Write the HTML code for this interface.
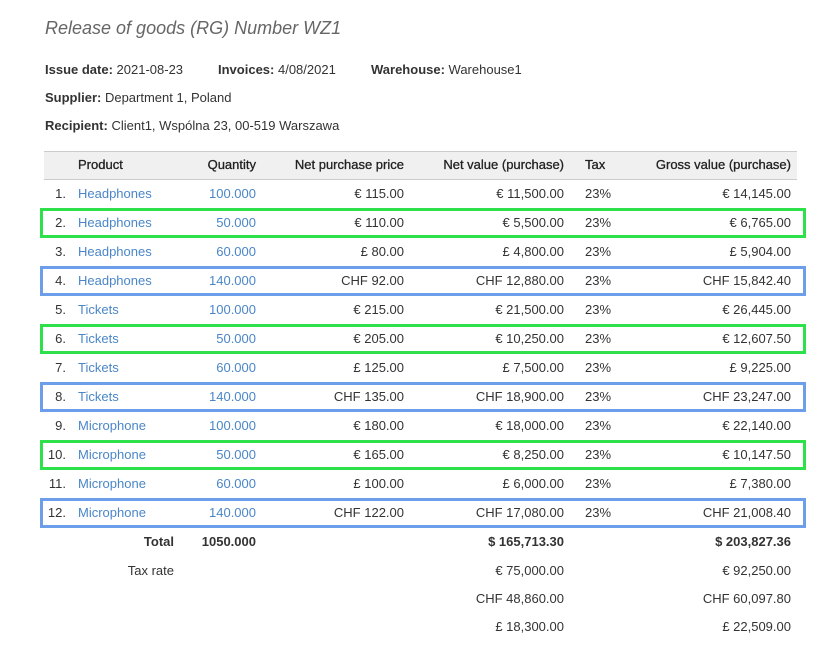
<!DOCTYPE html>
<html><head><meta charset="utf-8"><style>
body{margin:0;width:828px;height:650px;background:#fff;font-family:"Liberation Sans",Arial,sans-serif;font-size:13px;color:#333;position:relative;overflow:hidden}
.a{position:absolute;white-space:nowrap;line-height:16px}
.l{color:#4a86c8}
b{font-weight:bold}
.row{position:absolute;left:0;width:828px;height:29px}
.row span{position:absolute;top:7px;line-height:16px;white-space:nowrap}
.c1{right:762px}.c2{left:78px}.c3{right:572px}.c4{right:424px}.c5{right:264px}.c6{left:585px}.c7{right:37px}
.box{position:absolute;left:40px;width:760px;height:24px;border:3px solid}
.g{border-color:#2ee04a}.bl{border-color:#6d9eea}
.hd span{color:#222;-webkit-text-stroke:0.3px #222}
</style></head><body>
<div class="a" style="left:45px;top:17px;font-size:18px;line-height:22px;font-style:italic;color:#666">Release of goods (RG) Number WZ1</div>
<div class="a" style="left:45px;top:62px"><b>Issue date:</b> 2021-08-23</div>
<div class="a" style="left:218px;top:62px"><b>Invoices:</b> 4/08/2021</div>
<div class="a" style="left:371px;top:62px"><b>Warehouse:</b> Warehouse1</div>
<div class="a" style="left:45px;top:90px"><b>Supplier:</b> Department 1, Poland</div>
<div class="a" style="left:45px;top:118px"><b>Recipient:</b> Client1, Wspólna 23, 00-519 Warszawa</div>
<div style="position:absolute;left:44px;top:151px;width:753px;height:27px;background:#f0f0f0;border-top:1px solid #ccc;border-bottom:1px solid #ccc"></div>
<div class="row hd" style="top:150px"><span class="c2">Product</span><span class="c3">Quantity</span><span class="c4">Net purchase price</span><span class="c5">Net value (purchase)</span><span class="c6">Tax</span><span class="c7">Gross value (purchase)</span></div>
<div style="position:absolute;left:44px;top:527px;width:753px;border-top:1px solid #ccc"></div>

<div class="row" style="top:179px"><span class="c1">1.</span><span class="c2 l">Headphones</span><span class="c3 l">100.000</span><span class="c4">€ 115.00</span><span class="c5">€ 11,500.00</span><span class="c6">23%</span><span class="c7">€ 14,145.00</span></div>
<div class="row" style="top:208px"><span class="c1">2.</span><span class="c2 l">Headphones</span><span class="c3 l">50.000</span><span class="c4">€ 110.00</span><span class="c5">€ 5,500.00</span><span class="c6">23%</span><span class="c7">€ 6,765.00</span></div>
<div class="row" style="top:237px"><span class="c1">3.</span><span class="c2 l">Headphones</span><span class="c3 l">60.000</span><span class="c4">£ 80.00</span><span class="c5">£ 4,800.00</span><span class="c6">23%</span><span class="c7">£ 5,904.00</span></div>
<div class="row" style="top:266px"><span class="c1">4.</span><span class="c2 l">Headphones</span><span class="c3 l">140.000</span><span class="c4">CHF 92.00</span><span class="c5">CHF 12,880.00</span><span class="c6">23%</span><span class="c7">CHF 15,842.40</span></div>
<div class="row" style="top:295px"><span class="c1">5.</span><span class="c2 l">Tickets</span><span class="c3 l">100.000</span><span class="c4">€ 215.00</span><span class="c5">€ 21,500.00</span><span class="c6">23%</span><span class="c7">€ 26,445.00</span></div>
<div class="row" style="top:324px"><span class="c1">6.</span><span class="c2 l">Tickets</span><span class="c3 l">50.000</span><span class="c4">€ 205.00</span><span class="c5">€ 10,250.00</span><span class="c6">23%</span><span class="c7">€ 12,607.50</span></div>
<div class="row" style="top:353px"><span class="c1">7.</span><span class="c2 l">Tickets</span><span class="c3 l">60.000</span><span class="c4">£ 125.00</span><span class="c5">£ 7,500.00</span><span class="c6">23%</span><span class="c7">£ 9,225.00</span></div>
<div class="row" style="top:382px"><span class="c1">8.</span><span class="c2 l">Tickets</span><span class="c3 l">140.000</span><span class="c4">CHF 135.00</span><span class="c5">CHF 18,900.00</span><span class="c6">23%</span><span class="c7">CHF 23,247.00</span></div>
<div class="row" style="top:411px"><span class="c1">9.</span><span class="c2 l">Microphone</span><span class="c3 l">100.000</span><span class="c4">€ 180.00</span><span class="c5">€ 18,000.00</span><span class="c6">23%</span><span class="c7">€ 22,140.00</span></div>
<div class="row" style="top:440px"><span class="c1">10.</span><span class="c2 l">Microphone</span><span class="c3 l">50.000</span><span class="c4">€ 165.00</span><span class="c5">€ 8,250.00</span><span class="c6">23%</span><span class="c7">€ 10,147.50</span></div>
<div class="row" style="top:469px"><span class="c1">11.</span><span class="c2 l">Microphone</span><span class="c3 l">60.000</span><span class="c4">£ 100.00</span><span class="c5">£ 6,000.00</span><span class="c6">23%</span><span class="c7">£ 7,380.00</span></div>
<div class="row" style="top:498px"><span class="c1">12.</span><span class="c2 l">Microphone</span><span class="c3 l">140.000</span><span class="c4">CHF 122.00</span><span class="c5">CHF 17,080.00</span><span class="c6">23%</span><span class="c7">CHF 21,008.40</span></div>

<div class="box g" style="top:208px"></div>
<div class="box bl" style="top:266px"></div>
<div class="box g" style="top:324px"></div>
<div class="box bl" style="top:382px"></div>
<div class="box g" style="top:440px"></div>
<div class="box bl" style="top:498px"></div>

<div class="row" style="top:527px;font-weight:bold"><span style="right:654px">Total</span><span class="c3">1050.000</span><span class="c5">$ 165,713.30</span><span class="c7">$ 203,827.36</span></div>
<div class="row" style="top:556px"><span style="right:654px">Tax rate</span><span class="c5">€ 75,000.00</span><span class="c7">€ 92,250.00</span></div>
<div class="row" style="top:584px"><span class="c5">CHF 48,860.00</span><span class="c7">CHF 60,097.80</span></div>
<div class="row" style="top:612px"><span class="c5">£ 18,300.00</span><span class="c7">£ 22,509.00</span></div>
</body></html>
